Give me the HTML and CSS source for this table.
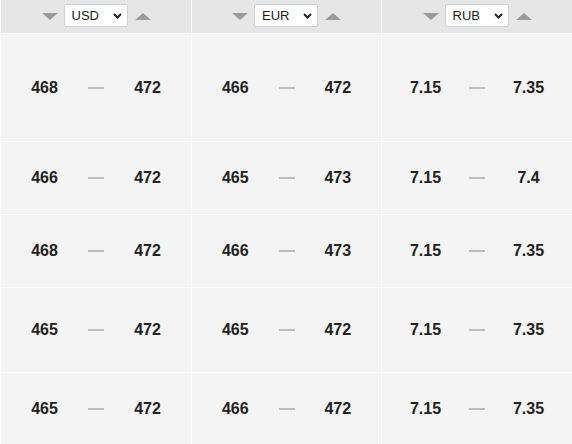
FILE: index.html
```html
<!DOCTYPE html>
<html>
<head>
<meta charset="utf-8">
<link rel="stylesheet" href="styles.css">
</head>
<body>
<div class="rates">
  <div class="head">
    <span class="tri tri-down"></span>
    <div class="sel"><span>USD</span><svg class="chev" width="9" height="6" viewBox="0 0 9 6"><path d="M1 1 L4.5 4.5 L8 1" fill="none" stroke="#222" stroke-width="2"/></svg></div>
    <span class="tri tri-up"></span>
  </div>
  <div class="head">
    <span class="tri tri-down"></span>
    <div class="sel"><span>EUR</span><svg class="chev" width="9" height="6" viewBox="0 0 9 6"><path d="M1 1 L4.5 4.5 L8 1" fill="none" stroke="#222" stroke-width="2"/></svg></div>
    <span class="tri tri-up"></span>
  </div>
  <div class="head">
    <span class="tri tri-down"></span>
    <div class="sel"><span>RUB</span><svg class="chev" width="9" height="6" viewBox="0 0 9 6"><path d="M1 1 L4.5 4.5 L8 1" fill="none" stroke="#222" stroke-width="2"/></svg></div>
    <span class="tri tri-up"></span>
  </div>

  <div class="cell"><span>468</span><i class="dash"></i><span>472</span></div>
  <div class="cell"><span>466</span><i class="dash"></i><span>472</span></div>
  <div class="cell"><span>7.15</span><i class="dash"></i><span>7.35</span></div>

  <div class="cell"><span>466</span><i class="dash"></i><span>472</span></div>
  <div class="cell"><span>465</span><i class="dash"></i><span>473</span></div>
  <div class="cell"><span>7.15</span><i class="dash"></i><span>7.4</span></div>

  <div class="cell"><span>468</span><i class="dash"></i><span>472</span></div>
  <div class="cell"><span>466</span><i class="dash"></i><span>473</span></div>
  <div class="cell"><span>7.15</span><i class="dash"></i><span>7.35</span></div>

  <div class="cell"><span>465</span><i class="dash"></i><span>472</span></div>
  <div class="cell"><span>465</span><i class="dash"></i><span>472</span></div>
  <div class="cell"><span>7.15</span><i class="dash"></i><span>7.35</span></div>

  <div class="cell"><span>465</span><i class="dash"></i><span>472</span></div>
  <div class="cell"><span>466</span><i class="dash"></i><span>472</span></div>
  <div class="cell"><span>7.15</span><i class="dash"></i><span>7.35</span></div>
</div>
</body>
</html>
```

FILE: styles.css
```css
html, body {
  margin: 0;
  padding: 0;
  background: #ffffff;
  font-family: "Liberation Sans", Arial, sans-serif;
  overflow: hidden;
}
.rates {
  display: grid;
  grid-template-columns: 190px 189px 190px;
  grid-template-rows: 33px 107px 72px 72px 84px 72px;
  gap: 1px;
  padding-left: 1px;
  background: #ffffff;
  width: 572px;
  box-sizing: border-box;
}
.head {
  background: #e6e6e6;
  display: flex;
  align-items: flex-start;
  justify-content: center;
  gap: 6px;
  padding-top: 4px;
  box-sizing: border-box;
}
.tri {
  width: 0;
  height: 0;
  border-left: 8px solid transparent;
  border-right: 8px solid transparent;
  margin-top: 9px;
}
.tri-down {
  border-top: 7px solid #9b9b9b;
}
.tri-up {
  border-bottom: 7px solid #9b9b9b;
  margin-left: 1px;
}
.sel {
  width: 64px;
  height: 23px;
  box-sizing: border-box;
  border: 1px solid #c8d2e0;
  border-radius: 2px;
  background: #ffffff;
  display: flex;
  align-items: center;
  justify-content: space-between;
  padding: 0 5px 0 7px;
  font-size: 13px;
  color: #1a1a1a;
}
.chev {
  display: block;
}
.cell {
  background: #f4f4f4;
  display: grid;
  grid-template-columns: 1fr 16px 1fr;
  align-items: center;
  font-size: 16px;
  font-weight: bold;
  color: #222222;
}
.cell span {
  text-align: center;
}
.dash {
  display: block;
  height: 2px;
  background: #bdbdbd;
}
```
